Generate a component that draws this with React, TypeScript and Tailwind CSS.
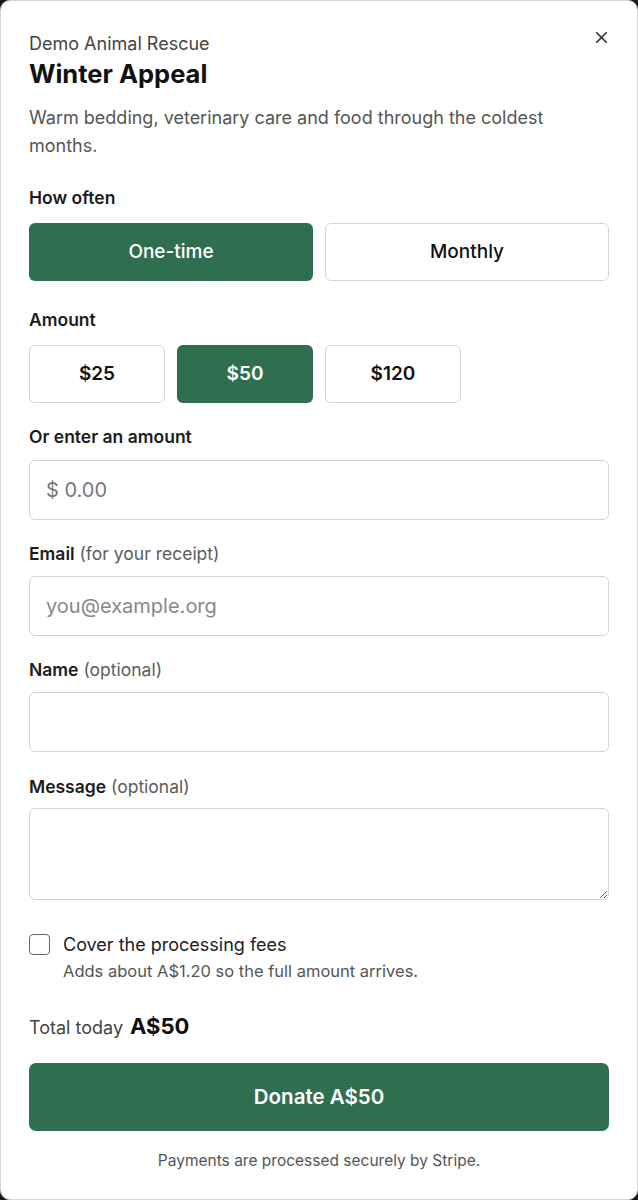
import { X } from "lucide-react";

const amounts = ["$25", "$50", "$120"];

function Label({ main, hint }: { main: string; hint?: string }) {
    return (
        <div className="text-[17.5px] font-semibold text-[#1c1c1c] leading-6">
            {main}
            {hint && <span className="font-normal text-[#5c5c5c]"> {hint}</span>}
        </div>
    );
}

export default function App() {
    return (
        <div className="bg-[#1a1a1a] min-h-screen" style={{ fontFamily: "Inter, 'Noto Sans', sans-serif" }}>
            <div className="relative bg-white border border-[#d9d6cc] rounded-[10px] h-[1200px] px-[28px] pt-[31px]">
                <button className="absolute right-[22px] top-[23px] p-1 text-[#333]">
                    <X size={19} strokeWidth={2.2} />
                </button>

                <div className="text-[18px] text-[#444] leading-6">Demo Animal Rescue</div>
                <h1 className="text-[25.5px] font-bold text-[#111] leading-8 mt-[2px]">Winter Appeal</h1>
                <p className="text-[18px] text-[#555] leading-[28px] mt-[14px] pr-4">
                    Warm bedding, veterinary care and food through the coldest months.
                </p>

                <div className="mt-[26px]">
                    <Label main="How often" />
                    <div className="grid grid-cols-2 gap-3 mt-[13px]">
                        <button className="h-[58px] rounded-[6px] bg-[#2f6f50] text-white text-[19px] font-medium">One-time</button>
                        <button className="h-[58px] rounded-[6px] border border-[#d6d4cf] bg-white text-[#111] text-[19px] font-medium">Monthly</button>
                    </div>
                </div>

                <div className="mt-[27px]">
                    <Label main="Amount" />
                    <div className="grid grid-cols-4 gap-3 mt-[13px]">
                        {amounts.map((a) =>
                            a === "$50" ? (
                                <button key={a} className="h-[58px] rounded-[6px] bg-[#2f6f50] text-white text-[19px] font-semibold">{a}</button>
                            ) : (
                                <button key={a} className="h-[58px] rounded-[6px] border border-[#d6d4cf] bg-white text-[#111] text-[19px] font-semibold">{a}</button>
                            )
                        )}
                    </div>
                </div>

                <div className="mt-[22px]">
                    <Label main="Or enter an amount" />
                    <input placeholder="$ 0.00" className="mt-[11px] w-full h-[60px] rounded-[6px] border border-[#d6d4cf] px-4 text-[20px] placeholder:text-[#777] outline-none" />
                </div>

                <div className="mt-[22px]">
                    <Label main="Email" hint="(for your receipt)" />
                    <input placeholder="you@example.org" className="mt-[10px] w-full h-[60px] rounded-[6px] border border-[#d6d4cf] px-4 text-[20px] placeholder:text-[#888] outline-none" />
                </div>

                <div className="mt-[22px]">
                    <Label main="Name" hint="(optional)" />
                    <input className="mt-[10px] w-full h-[60px] rounded-[6px] border border-[#d6d4cf] px-4 text-[20px] outline-none" />
                </div>

                <div className="mt-[23px]">
                    <Label main="Message" hint="(optional)" />
                    <textarea className="mt-[9px] block w-full h-[92px] rounded-[6px] border border-[#d6d4cf] px-4 py-3 text-[18px] outline-none" />
                </div>

                <div className="flex gap-[13px] mt-[33px]">
                    <div className="w-[21px] h-[21px] rounded-[4px] border-[1.5px] border-[#666] bg-white mt-[1px] shrink-0" />
                    <div>
                        <div className="text-[18px] text-[#1c1c1c] leading-6">Cover the processing fees</div>
                        <div className="text-[16.5px] text-[#555] leading-6 mt-[2px]">Adds about A$1.20 so the full amount arrives.</div>
                    </div>
                </div>

                <div className="mt-[27px] flex items-baseline gap-[7px] leading-8">
                    <span className="text-[18px] text-[#444]">Total today</span>
                    <span className="text-[22px] font-bold text-[#111]">A$50</span>
                </div>

                <button className="mt-[19px] w-full h-[68px] rounded-[7px] bg-[#2f6f50] text-white text-[20.5px] font-semibold">Donate A$50</button>

                <p className="text-center text-[15.5px] text-[#555] mt-[18px]">Payments are processed securely by Stripe.</p>
            </div>
        </div>
    );
}
